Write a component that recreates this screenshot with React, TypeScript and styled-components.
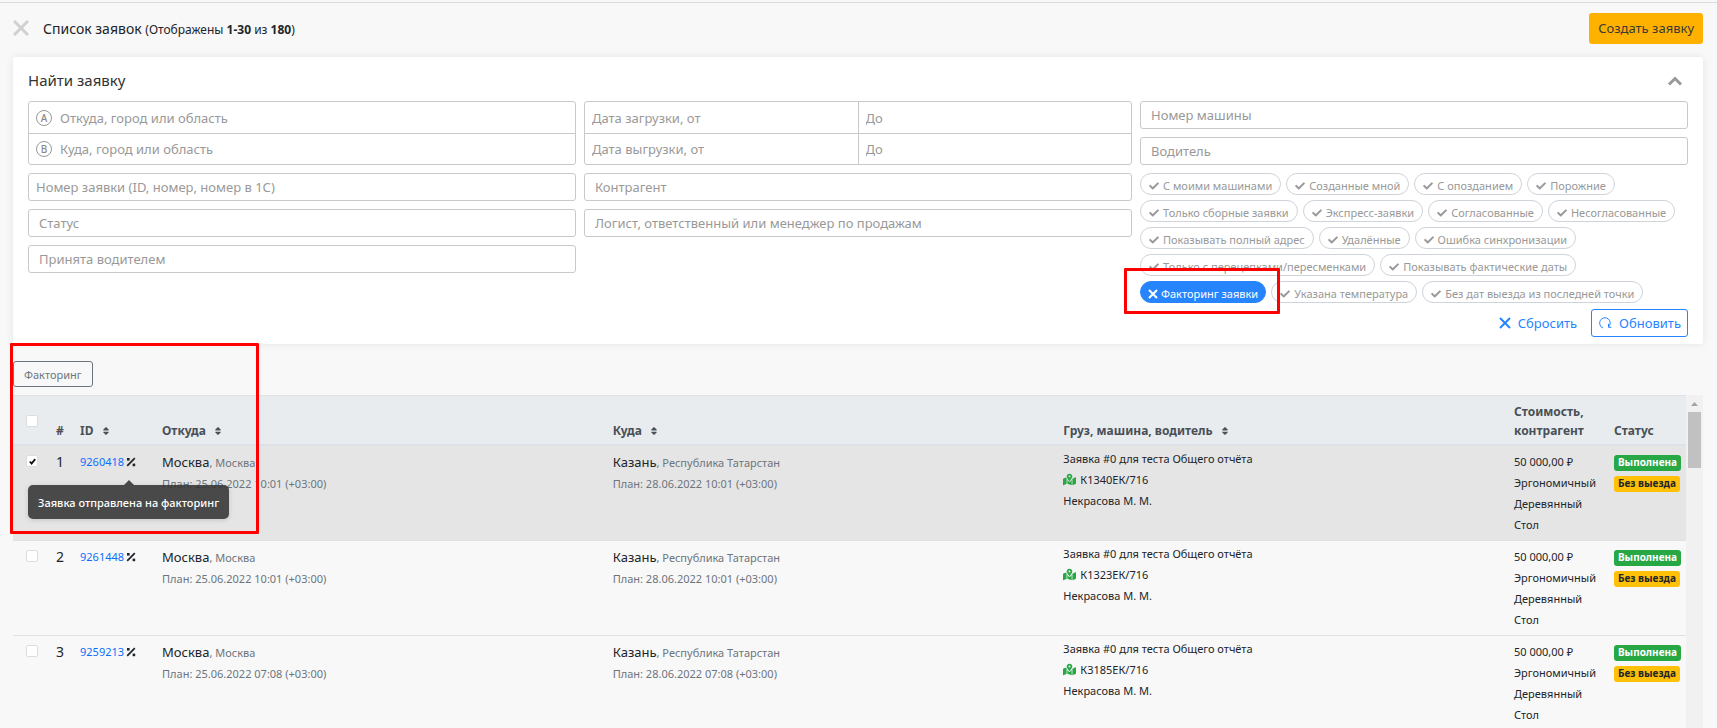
import React, { useState } from "react";
import styled, { createGlobalStyle, css } from "styled-components";
import { FaCheck, FaSort, FaMapMarkedAlt } from "react-icons/fa";

const GlobalStyle = createGlobalStyle`
  *, *::before, *::after { box-sizing: border-box; }
  body {
    margin: 0;
    background: #f8f8f8;
    color: #212529;
    font-family: "Noto Sans", sans-serif;
    font-size: 14px;
    line-height: 21px;
  }
  button, input { font-family: inherit; }
`;

const Page = styled.div`
  display: flex;
  flex-direction: column;
  height: 100vh;
  overflow: hidden;
  padding: 2px 14px 0 13px;
`;

const TopLine = styled.div`
  flex: none;
  height: 1px;
  margin: 0 -14px 0 -13px;
  background: #dcdcdc;
`;

const Header = styled.header`
  flex: none;
  display: flex;
  align-items: center;
  height: 54px;
  padding-bottom: 4px;
`;

const IconButton = styled.button`
  display: flex;
  padding: 0;
  border: 0;
  background: none;
  color: #d0d0d0;
  cursor: pointer;
`;

const Title = styled.h1`
  flex: 1;
  margin: 0 0 0 14px;
  padding-top: 2px;
  font-size: 14px;
  font-weight: 400;
`;

const Count = styled.span`
  font-size: 12px;
`;

const CreateButton = styled.button`
  height: 31px;
  padding: 0 9px;
  border: 0;
  border-radius: 3px;
  background: #ffb100;
  color: #3a3a3a;
  font-size: 13px;
  cursor: pointer;
`;

const Card = styled.section`
  flex: none;
  padding: 12px 15px 7px;
  border-radius: 3px;
  background: #fff;
  box-shadow: 0 0 8px rgba(0, 0, 0, 0.08);
`;

const CardHead = styled.div`
  display: flex;
  align-items: center;
  justify-content: space-between;
  height: 22px;
  margin-bottom: 10px;
  padding-right: 5px;
`;

const CardTitle = styled.h2`
  margin: 0;
  font-size: 15px;
  font-weight: 400;
  color: #333;
`;

const Columns = styled.form`
  display: grid;
  grid-template-columns: repeat(3, minmax(0, 1fr));
  gap: 8px;
`;

const Column = styled.div`
  display: flex;
  flex-direction: column;
  gap: 8px;
`;

const frame = css`
  border: 1px solid #c9c9c9;
  border-radius: 3px;
  background: #fff;
`;

const Field = styled.input<{ $inset?: number }>`
  ${frame}
  width: 100%;
  height: 28px;
  padding: 0 ${(p) => p.$inset ?? 10}px;
  color: #333;
  font-size: 13px;
  outline: none;
  &::placeholder { color: #999; opacity: 1; }
`;

const Group = styled.div`
  ${frame}
  height: 64px;
  display: grid;
  grid-template-rows: 1fr 1fr;
  overflow: hidden;
`;

const GroupRow = styled.div`
  display: flex;
  align-items: center;
  & + & { border-top: 1px solid #c9c9c9; }
`;

const BareField = styled.input`
  flex: 1;
  min-width: 0;
  height: 100%;
  padding: 0 7px;
  border: 0;
  background: none;
  color: #333;
  font-size: 13px;
  outline: none;
  &::placeholder { color: #999; opacity: 1; }
  & + & { border-left: 1px solid #c9c9c9; }
`;

const Letter = styled.span`
  display: flex;
  align-items: center;
  justify-content: center;
  width: 16px;
  height: 16px;
  margin: 0 1px 0 7px;
  border: 1px solid #999;
  border-radius: 50%;
  color: #888;
  font-size: 10px;
  font-weight: 500;
  line-height: 1;
`;

const Chips = styled.div`
  display: flex;
  flex-wrap: wrap;
  gap: 5px;
`;

const Chip = styled.button<{ $active?: boolean }>`
  display: flex;
  align-items: center;
  gap: ${(p) => (p.$active ? 3 : 4)}px;
  height: 22px;
  padding: 3px ${(p) => (p.$active ? 7 : 8)}px 0;
  border: 1px solid ${(p) => (p.$active ? "#2684ff" : "#ced4da")};
  border-radius: 11px;
  background: ${(p) => (p.$active ? "#2684ff" : "#fff")};
  color: ${(p) => (p.$active ? "#fff" : "#999")};
  font-size: 11px;
  line-height: 18px;
  white-space: nowrap;
  cursor: pointer;
`;

const Actions = styled.div`
  display: flex;
  justify-content: flex-end;
  gap: 14px;
  margin-top: -2px;
`;

const ActionButton = styled.button<{ $outlined?: boolean }>`
  display: flex;
  align-items: center;
  gap: 7px;
  height: 28px;
  padding: 0 ${(p) => (p.$outlined ? 6 : 0)}px;
  border: ${(p) => (p.$outlined ? "1px solid #2684ff" : "0")};
  border-radius: 3px;
  background: none;
  color: #2684ff;
  font-size: 13px;
  cursor: pointer;
`;

const Toolbar = styled.div`
  flex: none;
  padding: 17px 0 8px;
`;

const OutlineButton = styled.button`
  display: block;
  height: 26px;
  padding: 0 10px;
  border: 1px solid #6c757d;
  border-radius: 3px;
  background: none;
  color: #6c757d;
  font-size: 11px;
  cursor: pointer;
`;

const TableArea = styled.div`
  flex: 1;
  min-height: 0;
  display: flex;
  overflow: hidden;
`;

const Table = styled.table`
  flex: 1;
  align-self: flex-start;
  width: 100%;
  min-width: 0;
  table-layout: fixed;
  border-collapse: separate;
  border-spacing: 0;
`;

const Th = styled.th<{ $width?: number }>`
  width: ${(p) => (p.$width ? `${p.$width}px` : "auto")};
  height: 51px;
  padding: 5px 5px 4px;
  border-top: 1px solid #dee2e6;
  border-bottom: 2px solid #dee2e6;
  background: #e9ecef;
  color: #495057;
  font-size: 12px;
  line-height: 19px;
  text-align: left;
  vertical-align: bottom;
  svg { margin-left: 4px; vertical-align: -1px; }
`;

const CheckTh = styled(Th)`
  padding-bottom: 8px;
  vertical-align: middle;
`;

const Row = styled.tr<{ $selected?: boolean }>`
  background: ${(p) => (p.$selected ? "#e5e5e5" : "transparent")};
`;

const Td = styled.td<{ $small?: boolean }>`
  height: 95px;
  padding: 5px;
  border-bottom: 1px solid #dee2e6;
  vertical-align: top;
  font-size: ${(p) => (p.$small ? 11 : 14)}px;
`;

const CargoTd = styled(Td)`
  padding-top: 2px;
`;

const Check = styled.input`
  appearance: none;
  display: block;
  width: 12px;
  height: 12px;
  margin: 4px 0 0 8px;
  border: 1px solid #ddd;
  border-radius: 2px;
  background: #fff;
  &:checked {
    background: #fff url("data:image/svg+xml,%3Csvg xmlns='http://www.w3.org/2000/svg' viewBox='0 0 10 10'%3E%3Cpath d='M2 5l2 2.4L8 2.4' fill='none' stroke='%23111' stroke-width='2'/%3E%3C/svg%3E") center / 9px no-repeat;
  }
`;

const IdLine = styled.div`
  position: relative;
  display: flex;
  align-items: center;
  gap: 2px;
`;

const IdLink = styled.a`
  color: #0d6efd;
  font-size: 11px;
  text-decoration: none;
`;

const City = styled.span`
  font-size: 13px;
`;

const Muted = styled.span`
  color: #6c757d;
  font-size: 11px;
`;

const Line = styled.div`
  height: 21px;
`;

const Vehicle = styled.div`
  display: flex;
  align-items: center;
  gap: 4px;
  svg { color: #28a745; }
`;

const Badge = styled.span<{ $warn?: boolean }>`
  display: inline-block;
  height: 16px;
  padding: 0 4px;
  border-radius: 3px;
  background: ${(p) => (p.$warn ? "#ffc107" : "#28a745")};
  color: ${(p) => (p.$warn ? "#212529" : "#fff")};
  font-size: 10px;
  font-weight: 700;
  line-height: 15px;
  white-space: nowrap;
  vertical-align: middle;
`;

const Tooltip = styled.div`
  position: absolute;
  z-index: 2;
  top: 34px;
  left: -52px;
  padding: 7px 10px 6px;
  border-radius: 5px;
  background: rgba(51, 51, 51, 0.88);
  box-shadow: 0 1px 5px rgba(0, 0, 0, 0.15);
  color: #fff;
  font-size: 11px;
  font-weight: 500;
  white-space: nowrap;
  &::before {
    content: "";
    position: absolute;
    bottom: 100%;
    left: 96px;
    border: 5px solid transparent;
    border-top: 0;
    border-bottom-color: rgba(51, 51, 51, 0.88);
  }
`;

const Scrollbar = styled.div`
  flex: none;
  display: flex;
  flex-direction: column;
  align-items: center;
  width: 17px;
  background: #f1f1f1;
`;

const ScrollUp = styled.button`
  display: flex;
  align-items: center;
  justify-content: center;
  width: 17px;
  height: 17px;
  padding: 0;
  border: 0;
  background: none;
`;

const Thumb = styled.div`
  width: 13px;
  height: 56px;
  background: #c1c1c1;
`;

const Anchor = styled.div`
  position: relative;
`;

const Mark = styled.div<{ $box: [number, number, number, number] }>`
  position: absolute;
  z-index: 3;
  left: ${(p) => p.$box[0]}px;
  top: ${(p) => p.$box[1]}px;
  width: ${(p) => p.$box[2]}px;
  height: ${(p) => p.$box[3]}px;
  border: 3px solid #f00;
  border-radius: 1px;
  pointer-events: none;
`;

const PercentIcon = () => (
  <svg width="10" height="10" viewBox="0 0 10 10" aria-hidden="true">
    <path d="M8.8 1.2L1.2 8.8" stroke="#212529" strokeWidth="1.8" />
    <rect x="1" y="1" width="2.6" height="2.6" fill="#212529" />
    <rect x="6.6" y="6.6" width="2.6" height="2.6" fill="#212529" />
  </svg>
);

const CrossIcon = ({ size, width }: { size: number; width: number }) => (
  <svg width={size} height={size} viewBox={`0 0 ${size} ${size}`} aria-hidden="true">
    <path
      d={`M1 1L${size - 1} ${size - 1}M${size - 1} 1L1 ${size - 1}`}
      stroke="currentColor"
      strokeWidth={width}
    />
  </svg>
);

const filters = [
  "С моими машинами", "Созданные мной", "С опозданием", "Порожние",
  "Только сборные заявки", "Экспресс-заявки", "Согласованные", "Несогласованные",
  "Показывать полный адрес", "Удалённые", "Ошибка синхронизации",
  "Только с перецепками/пересменками", "Показывать фактические даты",
  "Факторинг заявки", "Указана температура", "Без дат выезда из последней точки",
];

const orders = [
  { id: "9260418", from: "25.06.2022 10:01", to: "28.06.2022 10:01", car: "К1340ЕК/716" },
  { id: "9261448", from: "25.06.2022 10:01", to: "28.06.2022 10:01", car: "К1323ЕК/716" },
  { id: "9259213", from: "25.06.2022 07:08", to: "28.06.2022 07:08", car: "К3185ЕК/716" },
];

const TextField = ({ label, inset }: { label: string; inset?: number }) => (
  <Field type="text" placeholder={label} aria-label={label} $inset={inset} />
);

export default function App() {
  const [active, setActive] = useState(["Факторинг заявки"]);
  const [selected, setSelected] = useState(["9260418"]);
  const toggle = (list: string[], item: string) =>
    list.includes(item) ? list.filter((x) => x !== item) : [...list, item];

  return (
    <Page>
      <GlobalStyle />
      <TopLine />
      <Header>
        <IconButton aria-label="Закрыть">
          <CrossIcon size={16} width={3} />
        </IconButton>
        <Title>
          Список заявок <Count>(Отображены <b>1-30</b> из <b>180</b>)</Count>
        </Title>
        <CreateButton>Создать заявку</CreateButton>
      </Header>

      <Card>
        <CardHead>
          <CardTitle>Найти заявку</CardTitle>
          <IconButton aria-label="Свернуть">
            <svg width="16" height="16" viewBox="0 0 16 16" aria-hidden="true">
              <path d="M2 12.500L8 6.500L14 12.500" fill="none" stroke="#999" strokeWidth="3" />
            </svg>
          </IconButton>
        </CardHead>
        <Columns onSubmit={(e) => e.preventDefault()}>
          <Column>
            <Group>
              <GroupRow>
                <Letter>A</Letter>
                <BareField placeholder="Откуда, город или область" aria-label="Откуда" />
              </GroupRow>
              <GroupRow>
                <Letter>B</Letter>
                <BareField placeholder="Куда, город или область" aria-label="Куда" />
              </GroupRow>
            </Group>
            <TextField label="Номер заявки (ID, номер, номер в 1С)" inset={7} />
            <TextField label="Статус" />
            <TextField label="Принята водителем" />
          </Column>
          <Column>
            <Group>
              <GroupRow>
                <BareField placeholder="Дата загрузки, от" aria-label="Дата загрузки, от" />
                <BareField placeholder="До" aria-label="Дата загрузки, до" />
              </GroupRow>
              <GroupRow>
                <BareField placeholder="Дата выгрузки, от" aria-label="Дата выгрузки, от" />
                <BareField placeholder="До" aria-label="Дата выгрузки, до" />
              </GroupRow>
            </Group>
            <TextField label="Контрагент" />
            <TextField label="Логист, ответственный или менеджер по продажам" />
          </Column>
          <Column>
            <TextField label="Номер машины" />
            <TextField label="Водитель" />
            <Anchor>
              <Chips>
                {filters.map((f) => {
                  const on = active.includes(f);
                  return (
                    <Chip key={f} type="button" $active={on} aria-pressed={on} onClick={() => setActive(toggle(active, f))}>
                      {on ? <CrossIcon size={10} width={2} /> : <FaCheck size={10} />}
                      {f}
                    </Chip>
                  );
                })}
              </Chips>
              <Mark $box={[-16, 95, 156, 46]} />
            </Anchor>
            <Actions>
              <ActionButton type="reset">
                <CrossIcon size={12} width={2} />
                Сбросить
              </ActionButton>
              <ActionButton type="submit" $outlined>
                <svg width="14" height="14" viewBox="0 0 13 14" fill="none" stroke="currentColor" aria-hidden="true">
                  <path d="M4.500 12A5.300 5.300 0 1 1 10 11M10 7.800V11.300H12.800" />
                </svg>
                Обновить
              </ActionButton>
            </Actions>
          </Column>
        </Columns>
      </Card>

      <Anchor>
        <Toolbar>
          <OutlineButton>Факторинг</OutlineButton>
        </Toolbar>
        <Mark $box={[-3, -1, 249, 191]} />
      </Anchor>

      <TableArea>
        <Table>
          <thead>
            <tr>
              <CheckTh $width={38}>
                <Check type="checkbox" aria-label="Выбрать все" />
              </CheckTh>
              <Th $width={24}>#</Th>
              <Th $width={82}>ID <FaSort size={10} /></Th>
              <Th>Откуда <FaSort size={10} /></Th>
              <Th>Куда <FaSort size={10} /></Th>
              <Th>Груз, машина, водитель <FaSort size={10} /></Th>
              <Th $width={100}>Стоимость, контрагент</Th>
              <Th $width={77}>Статус</Th>
            </tr>
          </thead>
          <tbody>
            {orders.map((o, i) => (
              <Row key={o.id} $selected={selected.includes(o.id)}>
                <Td>
                  <Check
                    type="checkbox"
                    aria-label={`Выбрать заявку ${o.id}`}
                    checked={selected.includes(o.id)}
                    onChange={() => setSelected(toggle(selected, o.id))}
                  />
                </Td>
                <Td>{i + 1}</Td>
                <Td>
                  <IdLine>
                    <IdLink href={`#${o.id}`}>{o.id}</IdLink>
                    <PercentIcon />
                    {i === 0 && <Tooltip role="tooltip">Заявка отправлена на факторинг</Tooltip>}
                  </IdLine>
                </Td>
                <Td>
                  <Line><City>Москва</City><Muted>, Москва</Muted></Line>
                  <Line><Muted>План: {o.from} (+03:00)</Muted></Line>
                </Td>
                <Td>
                  <Line><City>Казань</City><Muted>, Республика Татарстан</Muted></Line>
                  <Line><Muted>План: {o.to} (+03:00)</Muted></Line>
                </Td>
                <CargoTd $small>
                  <div>Заявка #0 для теста Общего отчёта</div>
                  <Vehicle><FaMapMarkedAlt size={13} />{o.car}</Vehicle>
                  <div>Некрасова М. М.</div>
                </CargoTd>
                <Td $small>
                  50 000,00 ₽<br />Эргономичный<br />Деревянный<br />Стол
                </Td>
                <Td>
                  <Badge>Выполнена</Badge>
                  <Badge $warn>Без выезда</Badge>
                </Td>
              </Row>
            ))}
          </tbody>
        </Table>
        <Scrollbar>
          <ScrollUp aria-label="Прокрутить вверх">
            <svg width="7" height="4" viewBox="0 0 7 4" aria-hidden="true"><path d="M0 4L3.500 0L7 4Z" fill="#a3a3a3" /></svg>
          </ScrollUp>
          <Thumb />
        </Scrollbar>
      </TableArea>
    </Page>
  );
}
